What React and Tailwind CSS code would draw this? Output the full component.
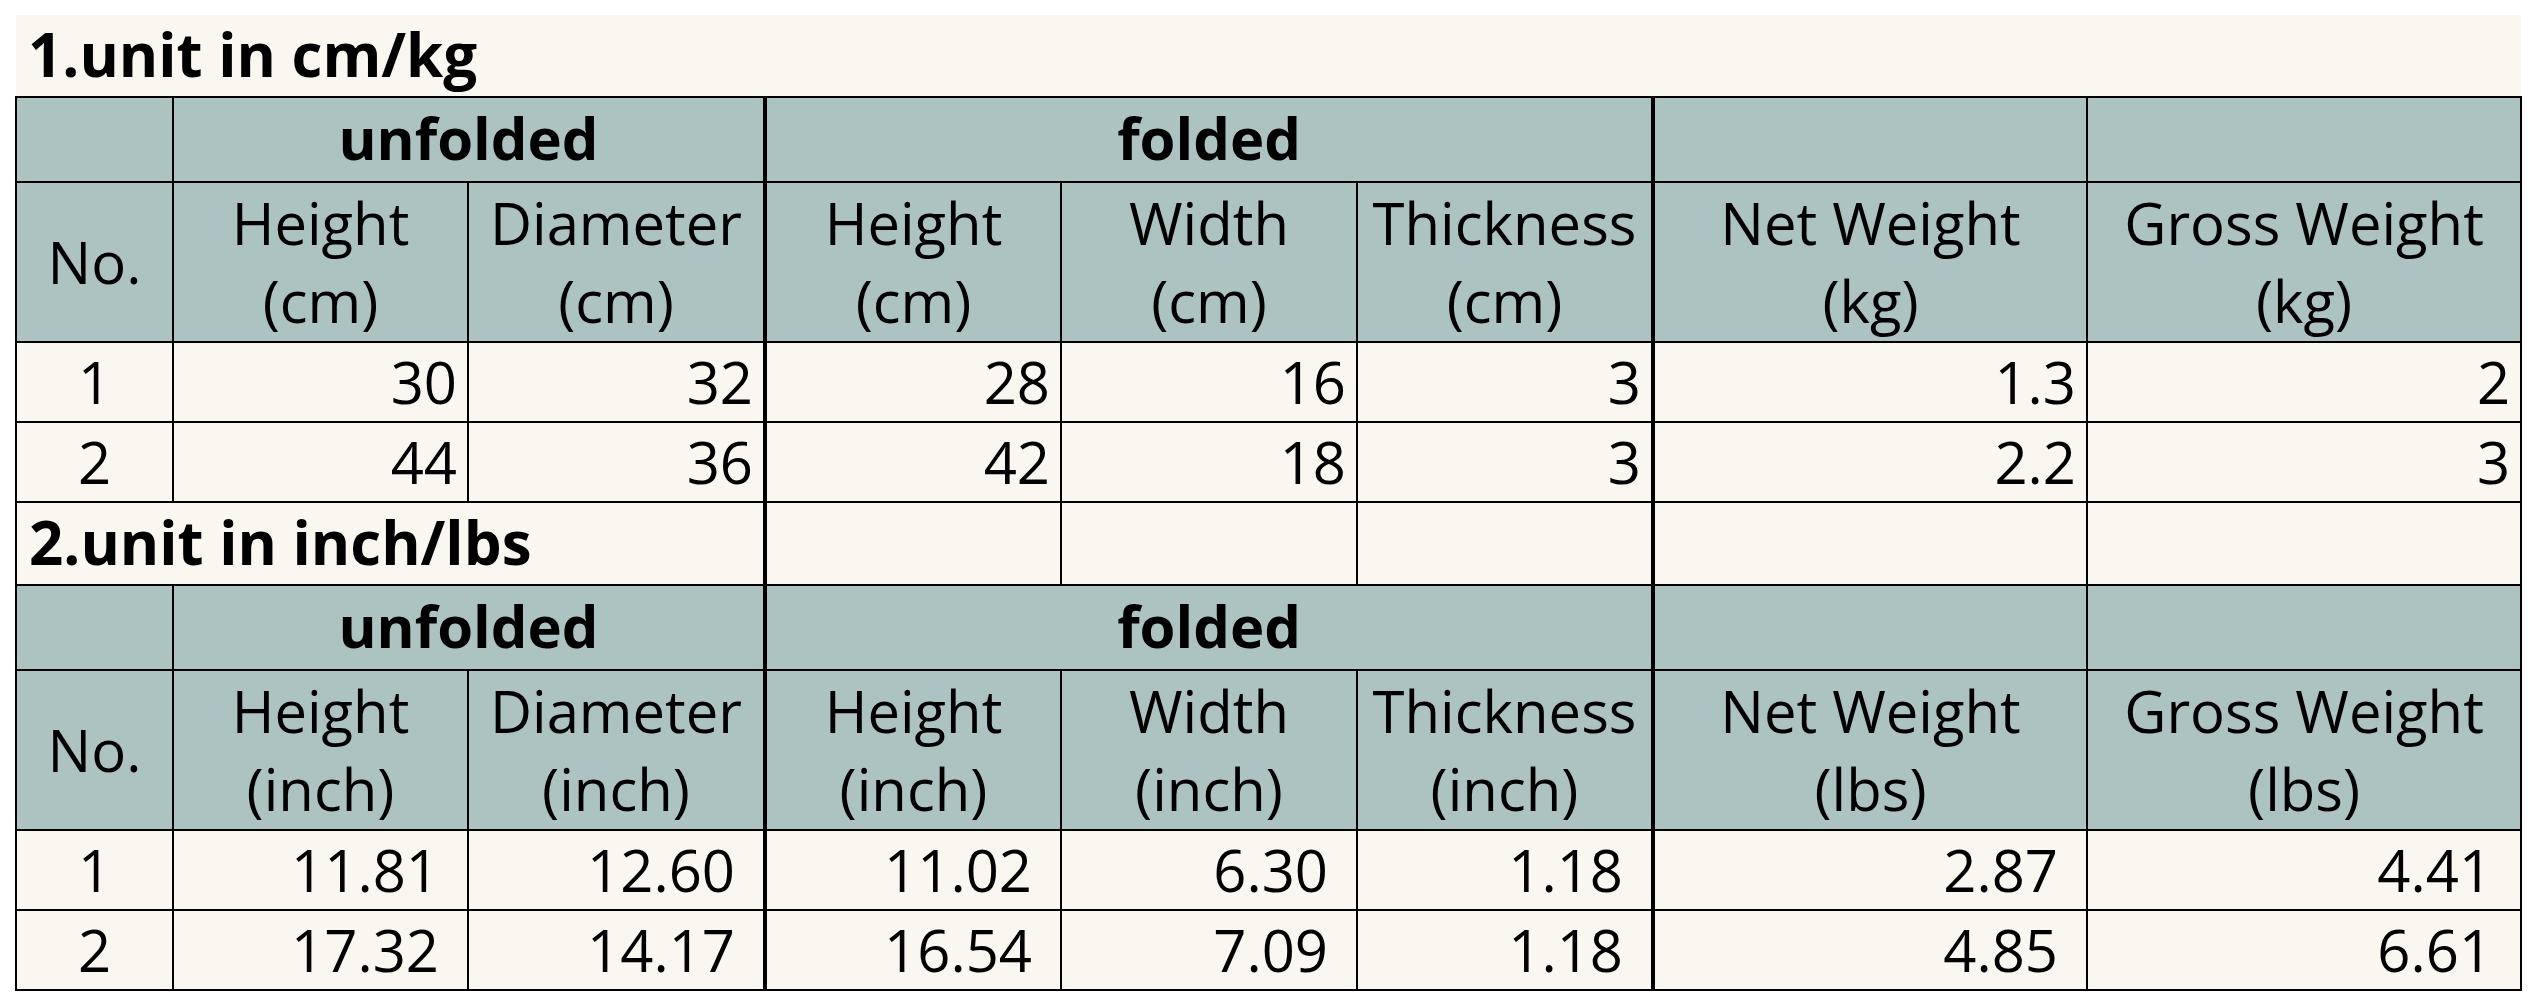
import React from 'react';

const COLS = [157, 295, 297, 296, 296, 296, 434, 434];

const SECTIONS = [
  {
    title: '1.unit in cm/kg',
    len: 'cm',
    wt: 'kg',
    pad: 'pr-[10px]',
    rows: [
      ['1', '30', '32', '28', '16', '3', '1.3', '2'],
      ['2', '44', '36', '42', '18', '3', '2.2', '3'],
    ],
  },
  {
    title: '2.unit in inch/lbs',
    len: 'inch',
    wt: 'lbs',
    pad: 'pr-[28px]',
    rows: [
      ['1', '11.81', '12.60', '11.02', '6.30', '1.18', '2.87', '4.41'],
      ['2', '17.32', '14.17', '16.54', '7.09', '1.18', '4.85', '6.61'],
    ],
  },
];

// thick divider after Diameter and Thickness columns
const thick = (i) => (i === 2 || i === 5 ? 'border-r-4' : '');

const cell = 'border-2 border-black p-0';
const hdr = `${cell} bg-[#adc3c1] text-center`;
const body = `${cell} bg-[#faf6f0]`;

function TitleRow({ section, first }) {
  if (first) {
    return (
      <tr className="h-[82px]">
        <td colSpan={8} className="bg-[#faf6f0] p-0 pl-[12px] pb-[4px] font-bold text-[60px]">
          {section.title}
        </td>
      </tr>
    );
  }
  return (
    <tr className="h-[83px]">
      <td colSpan={3} className={`${body} border-r-4 pl-[12px] pb-[4px] font-bold text-[60px]`}>
        {section.title}
      </td>
      {[3, 4, 5, 6, 7].map((i) => (
        <td key={i} className={`${body} ${thick(i)}`} />
      ))}
    </tr>
  );
}

function Section({ section, first }) {
  const { len, wt, pad, rows } = section;
  const labels = [
    ['Height', len],
    ['Diameter', len],
    ['Height', len],
    ['Width', len],
    ['Thickness', len],
    ['Net Weight', wt],
    ['Gross Weight', wt],
  ];

  return (
    <>
      <TitleRow section={section} first={first} />
      <tr className="h-[85px]">
        <td className={hdr} />
        <td colSpan={2} className={`${hdr} border-r-4 font-bold pb-[4px]`}>unfolded</td>
        <td colSpan={3} className={`${hdr} border-r-4 font-bold pb-[4px]`}>folded</td>
        <td className={hdr} />
        <td className={hdr} />
      </tr>
      <tr className="h-[160px]">
        <td className={hdr}>No.</td>
        {labels.map(([name, unit], i) => (
          <td key={i} className={`${hdr} ${thick(i + 1)} leading-[78px] whitespace-nowrap`}>
            {name}
            <br />({unit})
          </td>
        ))}
      </tr>
      {rows.map((r, ri) => (
        <tr key={ri} className="h-[80px]">
          {r.map((v, i) =>
            i === 0 ? (
              <td key={i} className={`${body} text-center`}>{v}</td>
            ) : (
              <td key={i} className={`${body} ${thick(i)} text-right ${pad}`}>{v}</td>
            )
          )}
        </tr>
      ))}
    </>
  );
}

export default function App() {
  return (
    <div className="w-[2536px] h-[1006px] bg-white pt-[15px] pl-[15px] font-['Open_Sans',sans-serif] text-[58px] leading-[70px] text-black">
      <table className="table-fixed border-collapse w-[2505px]">
        <colgroup>
          {COLS.map((w, i) => (
            <col key={i} style={{ width: w }} />
          ))}
        </colgroup>
        <tbody>
          {SECTIONS.map((s, i) => (
            <Section key={i} section={s} first={i === 0} />
          ))}
        </tbody>
      </table>
    </div>
  );
}
